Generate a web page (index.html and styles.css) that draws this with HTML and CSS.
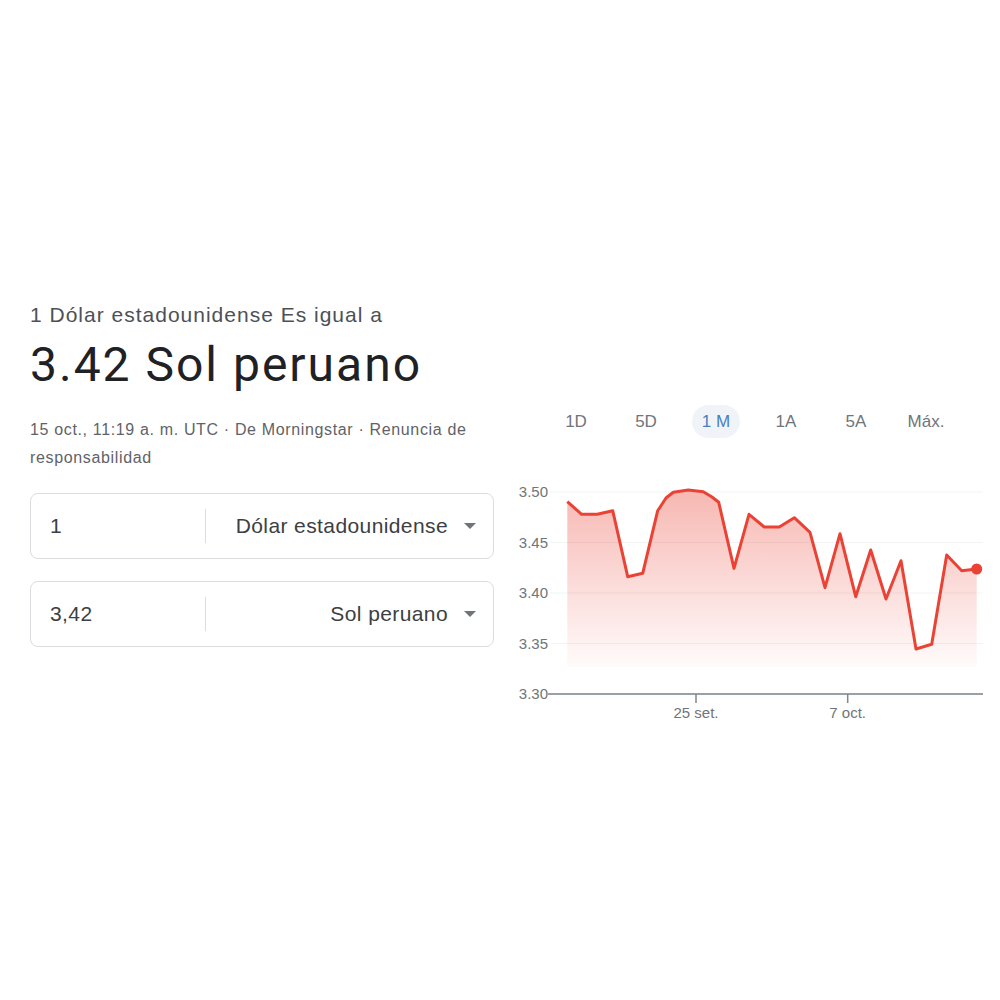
FILE: index.html
```html
<!DOCTYPE html>
<html lang="es">
<head>
  <meta charset="UTF-8" />
  <meta name="viewport" content="width=device-width, initial-scale=1.0"/>
  <title>Dólar a Sol peruano</title>
  <link rel="stylesheet" href="styles.css">
</head>
<body>

  <div class="page">
    <div class="label">1 Dólar estadounidense Es igual a</div>
    <div class="value">3.42 Sol peruano</div>

    <div class="row">
      <div class="left">
        <div class="meta">15 oct., 11:19 a. m. UTC · De Morningstar · Renuncia de responsabilidad</div>

        <div class="conv">
          <div class="amount">1</div>
          <div class="divider"></div>
          <div class="currency">Dólar estadounidense <span class="caret"></span></div>
        </div>

        <div class="conv">
          <div class="amount">3,42</div>
          <div class="divider"></div>
          <div class="currency">Sol peruano <span class="caret"></span></div>
        </div>
      </div>

      <div class="right">
        <div class="tabs">
          <div class="tab">1D</div>
          <div class="tab">5D</div>
          <div class="tab"><span class="active">1 M</span></div>
          <div class="tab">1A</div>
          <div class="tab">5A</div>
          <div class="tab">Máx.</div>
        </div>

        <svg class="chart" width="496" height="290" viewBox="0 0 496 290">
          <defs>
            <linearGradient id="area" x1="0" y1="0" x2="0" y2="1">
              <stop offset="0" stop-color="#ea4335" stop-opacity="0.38"/>
              <stop offset="1" stop-color="#ea4335" stop-opacity="0.02"/>
            </linearGradient>
          </defs>

          <!-- grid -->
          <g class="grid">
            <line x1="56" y1="52" x2="489" y2="52"/>
            <line x1="56" y1="102.5" x2="489" y2="102.5"/>
            <line x1="56" y1="153" x2="489" y2="153"/>
            <line x1="56" y1="203.5" x2="489" y2="203.5"/>
          </g>
          <g class="ylabels">
            <text x="54" y="57">3.50</text>
            <text x="54" y="107.5">3.45</text>
            <text x="54" y="158">3.40</text>
            <text x="54" y="208.5">3.35</text>
            <text x="54" y="259">3.30</text>
          </g>

          <path class="area" d="M73.3,61.7 L87.7,74.3 L103.3,74.3 L118.7,70.7 L133.7,136.7 L148.7,133.3 L163.7,70.7 L172,58 L179.3,52.3 L194.3,50 L209.3,51.7 L218,57 L224.7,62.3 L240,128.3 L255,74.3 L270.3,87 L285.3,87 L300.3,77.7 L316,92.3 L331,147.7 L346,93.7 L361.7,156.7 L376.7,110 L392,159 L407,120.7 L422,209 L437.7,204.3 L452.7,115 L467.7,130.7 L482.7,129 L482.7,227 L73.3,227 Z"/>
          <path class="line" d="M73.3,61.7 L87.7,74.3 L103.3,74.3 L118.7,70.7 L133.7,136.7 L148.7,133.3 L163.7,70.7 L172,58 L179.3,52.3 L194.3,50 L209.3,51.7 L218,57 L224.7,62.3 L240,128.3 L255,74.3 L270.3,87 L285.3,87 L300.3,77.7 L316,92.3 L331,147.7 L346,93.7 L361.7,156.7 L376.7,110 L392,159 L407,120.7 L422,209 L437.7,204.3 L452.7,115 L467.7,130.7 L482.7,129"/>
          <circle cx="482.7" cy="129" r="5.5" fill="#ea4335"/>

          <!-- x axis -->
          <line class="axis" x1="54" y1="254" x2="489" y2="254"/>
          <line class="tick" x1="202" y1="254" x2="202" y2="263"/>
          <line class="tick" x1="353.7" y1="254" x2="353.7" y2="263"/>
          <text class="xlabel" x="202" y="278">25 set.</text>
          <text class="xlabel" x="353.7" y="278">7 oct.</text>
        </svg>
      </div>
    </div>
  </div>

</body>
</html>
```

FILE: styles.css
```css
body {
  margin: 0;
  background: #fff;
  font-family: "Liberation Sans", Arial, sans-serif;
  color: #202124;
}

.page {
  padding: 303px 0 0 30px;
}

.label {
  font-size: 21px;
  line-height: 24px;
  letter-spacing: 1px;
  color: #4d5156;
}

.value {
  margin-top: 10px;
  font-family: Roboto, "Liberation Sans", sans-serif;
  font-size: 48px;
  line-height: 56px;
  letter-spacing: 2px;
  color: #202124;
}

.row {
  display: flex;
}

.left {
  width: 464px;
}

.meta {
  margin-top: 23px;
  font-size: 16px;
  line-height: 28px;
  letter-spacing: 0.65px;
  color: #5f6368;
}

.conv {
  display: flex;
  align-items: center;
  height: 64px;
  margin-top: 21px;
  border: 1px solid #dadce0;
  border-radius: 8px;
  font-size: 21px;
  letter-spacing: 0.4px;
}

.conv + .conv {
  margin-top: 22px;
}

.amount {
  width: 155px;
  padding-left: 19px;
  color: #3c4043;
}

.divider {
  width: 1px;
  height: 34px;
  background: #dadce0;
}

.currency {
  flex: 1;
  display: flex;
  justify-content: flex-end;
  align-items: center;
  gap: 16px;
  padding-right: 17px;
  color: #3c4043;
}

.caret {
  width: 0;
  height: 0;
  border-left: 6px solid transparent;
  border-right: 6px solid transparent;
  border-top: 6px solid #70757a;
}

.right {
  flex: 1;
}

.tabs {
  display: flex;
  margin: 12px 0 0 47px;
}

.tab {
  width: 70px;
  height: 33px;
  text-align: center;
  font-size: 17px;
  line-height: 33px;
  color: #70757a;
}

.tab .active {
  display: inline-block;
  padding: 0 10px;
  border-radius: 17px;
  background: #f0f4f9;
  color: #4a7fc1;
}

.chart {
  display: block;
  margin-top: 2px;
}

.grid line {
  stroke: #f1f3f4;
  stroke-width: 1;
}

.ylabels text {
  font-family: "Liberation Sans", Arial, sans-serif;
  font-size: 15px;
  fill: #70757a;
  text-anchor: end;
}

.area {
  fill: url(#area);
}

.line {
  fill: none;
  stroke: #ea4335;
  stroke-width: 3;
  stroke-linejoin: round;
}

.axis {
  stroke: #9aa0a6;
  stroke-width: 2;
}

.tick {
  stroke: #80868b;
  stroke-width: 1.5;
}

.xlabel {
  font-family: "Liberation Sans", Arial, sans-serif;
  font-size: 15px;
  fill: #70757a;
  text-anchor: middle;
}
```
